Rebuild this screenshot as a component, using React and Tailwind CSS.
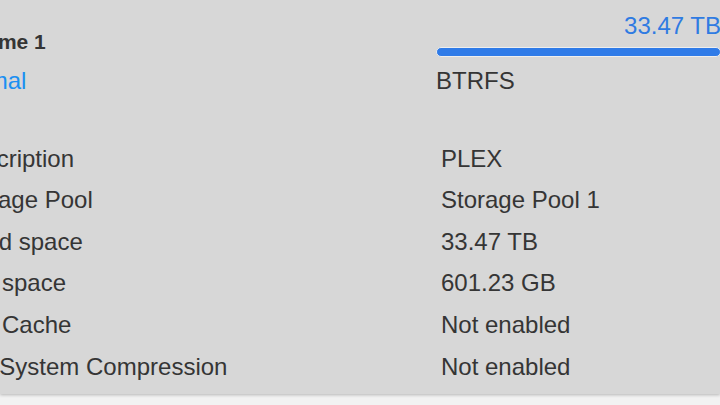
export default function App() {
  const rows = [
    { label: "Description", value: "PLEX", cls: "" },
    { label: "Storage Pool", value: "Storage Pool 1", cls: "" },
    { label: "Used space", value: "33.47 TB", cls: "ml-[2px]" },
    { label: "Free space", value: "601.23 GB", cls: "-ml-[8px]" },
    { label: "SSD Cache", value: "Not enabled", cls: "-ml-[8px]" },
    { label: "File System Compression", value: "Not enabled", cls: "" },
  ];
  return (
    <div className="w-[720px] h-[405px] overflow-hidden bg-[#f2f2f2] font-['Liberation_Sans',Arial,sans-serif] text-[#353535]">
      <div className="h-[394px] bg-[#d7d7d7] shadow-[0_1px_3px_rgba(0,0,0,0.25)] flex flex-col">
        <div className="ml-[-46px] grid grid-cols-[482px_285px]">
          <div className="flex flex-col pt-[30px]">
            <div className="text-[21px] leading-[24px] font-bold whitespace-nowrap">Volume 1</div>
            <div className="mt-[12.5px] text-[24px] leading-[28px] text-[#1b8ff2] whitespace-nowrap -ml-[5px]">Normal</div>
          </div>
          <div className="flex flex-col pt-[12px]">
            <div className="text-[24px] leading-[28px] text-[#2f7be2] text-right whitespace-nowrap">33.47 TB</div>
            <div className="mt-[7px] h-[10px] rounded-full bg-[#2f7be8] border border-[#eeeeee]"></div>
            <div className="mt-[10px] text-[24px] leading-[28px] whitespace-nowrap">BTRFS</div>
          </div>
        </div>
        <div className="mt-[42.5px] ml-[-46px] flex flex-col">
          {rows.map((r, i) => (
            <div key={i} className="grid grid-cols-[487px_1fr] h-[41.67px] leading-[41.67px] text-[24px] whitespace-nowrap">
              <div className={r.cls}>{r.label}</div>
              <div>{r.value}</div>
            </div>
          ))}
        </div>
      </div>
    </div>
  );
}
